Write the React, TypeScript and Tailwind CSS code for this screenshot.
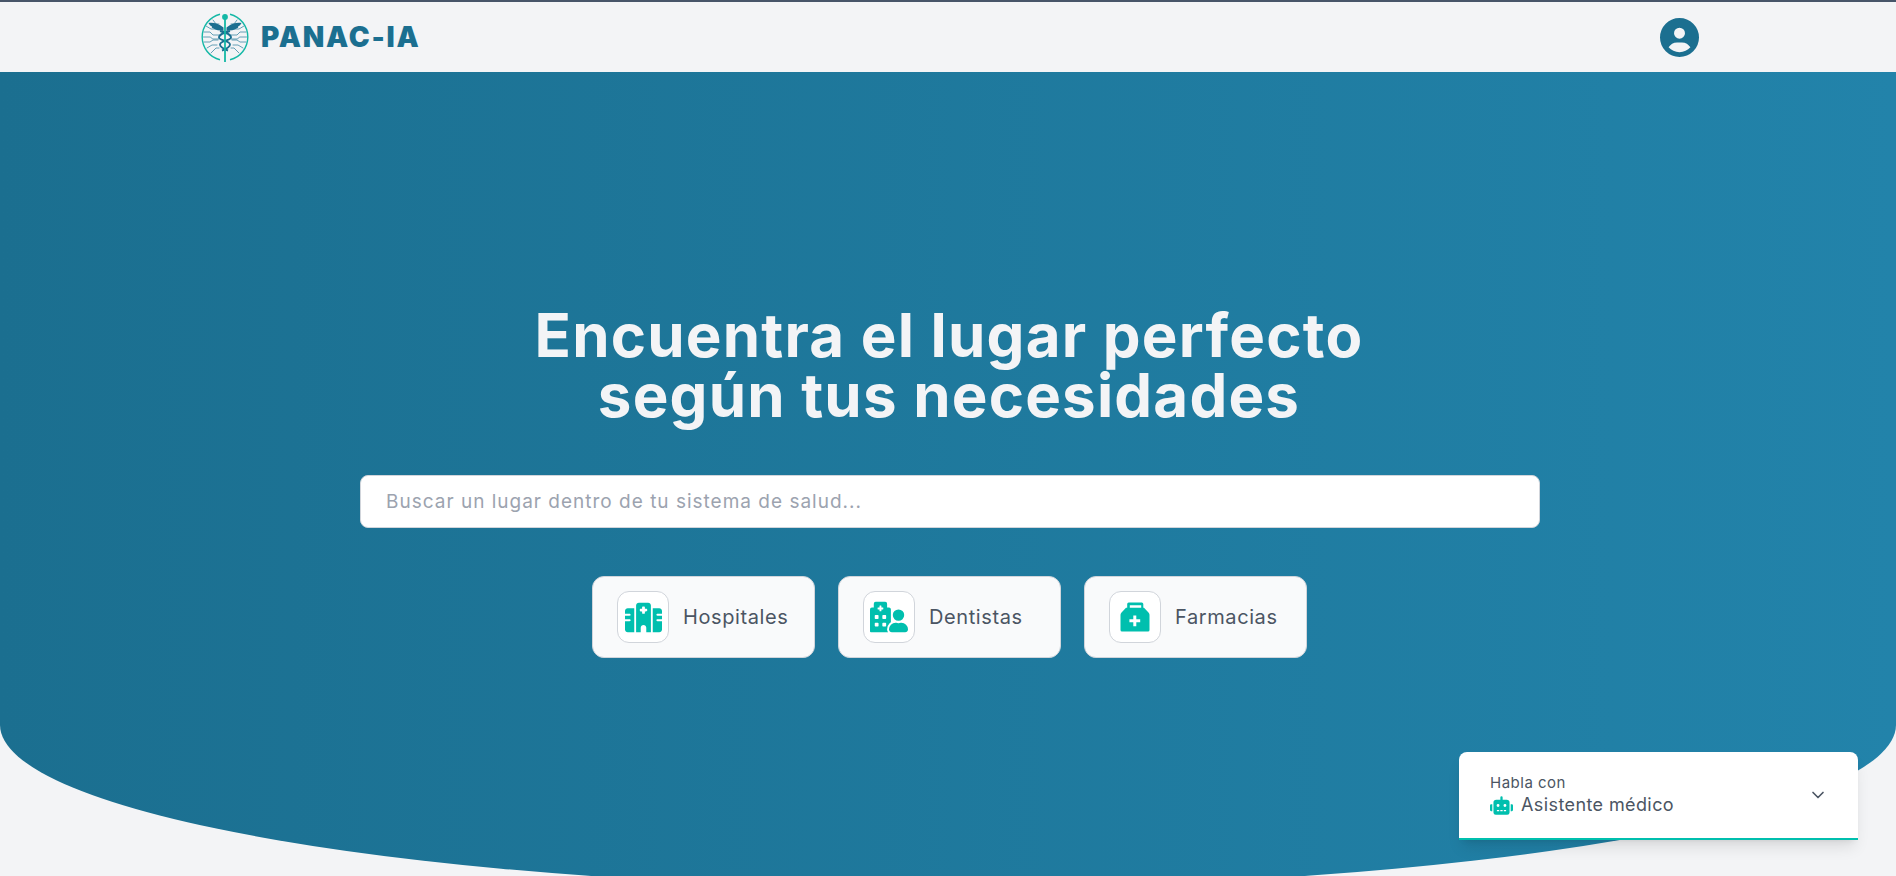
import { FaRobot, FaHospitalUser } from "react-icons/fa";
import { FaHospital, FaCircleUser } from "react-icons/fa6";
import { LuChevronDown } from "react-icons/lu";

function Logo() {
  return (
    <svg width="50" height="50" viewBox="0 0 50 50" fill="none" className="shrink-0">
      <path d="M20 2.200A23.500 23.500 0 0 0 20 47.800" stroke="#14b8a6" strokeWidth="1.4" />
      <path d="M30 2.200A23.500 23.500 0 0 1 30 47.800" stroke="#14b8a6" strokeWidth="1.4" />
      <g stroke="#3f8aa6" strokeWidth="0.8" strokeLinecap="round">
        <path d="M4 20h6l3 3h6M3.500 25h7l2 2h6M4 30h6l3-2h5M6 14l5 3h6M7 36l5-3h5M11 41l5-5h3M13 8l3 4h3" />
        <path d="M46 20h-6l-3 3h-6M46.500 25h-7l-2 2h-6M46 30h-6l-3-2h-5M44 14l-5 3h-6M43 36l-5-3h-5M39 41l-5-5h-3M37 8l-3 4h-3" />
      </g>
      <path d="M23.500 15.500C18 11 13 10.500 8.500 11c1 2 2 3 3.500 3.500-.5 1 0 1.500 1.500 2 2 1.500 6 2 10 2.500z" fill="#1b6f90" />
      <path d="M26.500 15.500C32 11 37 10.500 41.500 11c-1 2-2 3-3.500 3.500.5 1 0 1.500-1.500 2-2 1.500-6 2-10 2.500z" fill="#1b6f90" />
      <path d="M20 19c7 2 11 3.500 11 6.500s-11 3.500-11 7c0 3 4 4.500 8 6M30 19c-7 2-11 3.500-11 6.500s11 3.500 11 7c0 3-4 4.500-8 6" stroke="#1b6f90" strokeWidth="1.900" />
      <rect x="24.100" y="5" width="1.800" height="45" fill="#14b8a6" />
      <circle cx="25" cy="5" r="2.900" fill="#14b8a6" />
    </svg>
  );
}

function BagIcon() {
  return (
    <svg width="32" height="32" viewBox="0 0 32 32" className="text-[#00bfae]">
      <path
        fill="currentColor"
        fillRule="evenodd"
        d="M8.200 3a1.500 1.500 0 0 1 1.500-1.500h13.100A1.500 1.500 0 0 1 24.300 3v3.800h.7L29 11c1 1 1.500 2 1.500 3.200V29a1.500 1.500 0 0 1-1.500 1.500H3A1.500 1.500 0 0 1 1.500 29V14.200C1.500 13 2 12 3 11l4-4.200h1.200zM10.800 4.200v2.600h11.400V4.200zM14.300 14.500v3.800h-3.900v3h3.900v3.900h3v-3.900h3.900v-3h-3.900v-3.800z"
      />
    </svg>
  );
}

const items = [
  { label: "Hospitales", icon: <FaHospital size={37} className="text-[#00bfae]" /> },
  { label: "Dentistas", icon: <FaHospitalUser size={38} className="text-[#00bfae]" /> },
  { label: "Farmacias", icon: <BagIcon /> },
];

export default function App() {
  return (
    <div className="relative h-screen overflow-hidden bg-[#f3f4f6] font-['Inter','Liberation_Sans',sans-serif]">
      <header className="flex h-[72px] items-center justify-between border-t-2 border-[#475569] bg-[#f3f4f6] pl-[200px] pr-[197px]">
        <div className="flex items-center gap-[11px]">
          <Logo />
          <span className="text-[28px] font-black leading-none tracking-[1.8px] text-[#1b6f90]">PANAC-IA</span>
        </div>
        <FaCircleUser size={39} className="text-[#1b6f90]" />
      </header>

      <main className="flex h-[816px] flex-col items-center justify-center rounded-bl-[50%_20%] rounded-br-[50%_20%] bg-gradient-to-r from-[#1b6f90] to-[#2283aa] pl-[2px] pt-[3px]">
        <h1 className="mb-[50px] text-center text-[60px] font-bold leading-[60px] tracking-[1.2px] text-[#f3f4f6]">
          Encuentra el lugar perfecto
          <br />
          según tus necesidades
        </h1>
        <input
          type="text"
          placeholder="Buscar un lugar dentro de tu sistema de salud..."
          className="mb-12 ml-[2px] h-[53px] w-[1180px] rounded-lg border border-[#d1d5db] bg-white px-[25px] text-[19px] tracking-[1px] text-[#4b5563] outline-none placeholder:text-[#9ca3af]"
        />
        <div className="ml-[1px] flex gap-[23px]">
          {items.map((it) => (
            <button
              key={it.label}
              className="flex h-[82px] w-[223px] items-center gap-[14px] rounded-xl border border-[#d1d5db] bg-[#f9fafb] pl-[24px]"
            >
              <span className="flex size-[52px] items-center justify-center rounded-xl border border-[#d1d5db] bg-white">
                {it.icon}
              </span>
              <span className="text-[20px] tracking-[0.6px] text-[#4b5563]">{it.label}</span>
            </button>
          ))}
        </div>
      </main>

      <div className="absolute left-[1459px] top-[752px] flex h-[88px] w-[399px] items-center justify-between rounded-t-lg border-b-2 border-[#00bfae] bg-white pl-[31px] pr-[30px] shadow-lg">
        <div className="flex flex-col">
          <span className="text-[15px] leading-[20px] tracking-[0.5px] text-[#4b5563]">Habla con</span>
          <span className="flex items-center gap-[8px] text-[18px] leading-[24px] tracking-[0.4px] text-[#4b5563]">
            <FaRobot size={23} className="text-[#00bfae]" />
            Asistente médico
          </span>
        </div>
        <LuChevronDown size={20} className="text-[#4b5563]" />
      </div>
    </div>
  );
}
